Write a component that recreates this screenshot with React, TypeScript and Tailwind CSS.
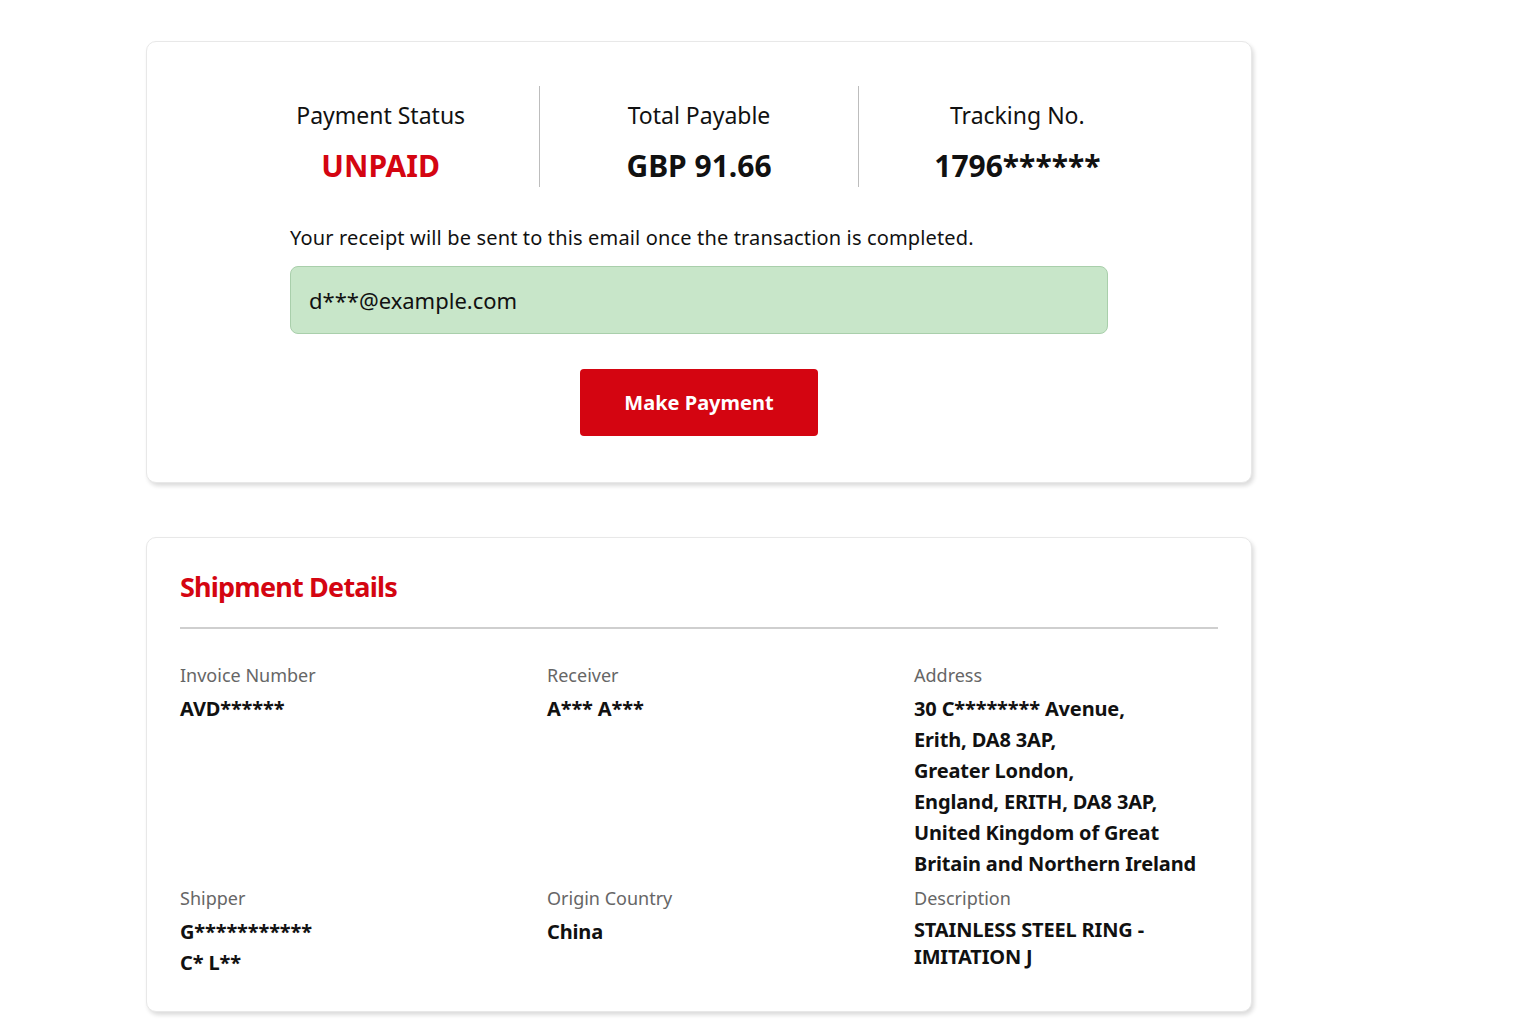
export default function App() {
  const font = { fontFamily: '"Noto Sans", "Open Sans", Arial, sans-serif' }

  return (
    <div className="min-h-screen bg-white pt-[41px] pb-8" style={font}>
      <div className="ml-[146px] w-[1106px] flex flex-col gap-[54px]">
        {/* payment summary */}
        <div className="rounded-[10px] border border-[#e8e8e8] bg-white shadow-[2px_3px_4px_rgba(0,0,0,0.14)] pt-[44px] pb-[46px]">
          <div className="mx-auto w-[954px] flex">
            <SummaryItem label="Payment Status" value="UNPAID" valueClass="text-[#d40511]" />
            <SummaryItem label="Total Payable" value="GBP 91.66" border />
            <SummaryItem label="Tracking No." value="1796******" border />
          </div>

          <div className="mx-auto w-[818px] mt-[37px]">
            <p className="text-[20px] leading-[28px] tracking-[0.15px] text-[#111]">
              Your receipt will be sent to this email once the transaction is completed.
            </p>
            <div className="mt-[14px] h-[68px] rounded-[8px] border border-[#a9cfab] bg-[#c8e6c9] flex items-center px-[18px] text-[22px] text-[#111]">
              d***@example.com
            </div>
          </div>

          <div className="flex justify-center mt-[35px]">
            <button className="w-[238px] h-[67px] rounded-[4px] bg-[#d40511] text-white text-[20px] font-bold">
              Make Payment
            </button>
          </div>
        </div>

        {/* shipment details */}
        <div className="rounded-[10px] border border-[#e8e8e8] bg-white shadow-[2px_3px_4px_rgba(0,0,0,0.14)] px-[33px] pt-[31px] pb-[33px]">
          <h2 className="text-[27px] leading-[36px] tracking-[-0.8px] font-bold text-[#d40511]">Shipment Details</h2>
          <div className="mt-[22px] border-t-2 border-[#cfcfcf]" />

          <div className="grid grid-cols-[367px_367px_1fr] mt-[34px] gap-y-[7px]">
            <Field label="Invoice Number" lines={['AVD******']} />
            <Field label="Receiver" lines={['A*** A***']} />
            <Field
              label="Address"
              lines={[
                '30 C******** Avenue,',
                'Erith, DA8 3AP,',
                'Greater London,',
                'England, ERITH, DA8 3AP,',
                'United Kingdom of Great',
                'Britain and Northern Ireland',
              ]}
            />
            <Field label="Shipper" lines={['G***********', 'C* L**']} />
            <Field label="Origin Country" lines={['China']} />
            <Field label="Description" lines={['STAINLESS STEEL RING -', 'IMITATION J']} tight />
          </div>
        </div>
      </div>
    </div>
  )
}

function SummaryItem({ label, value, valueClass = 'text-[#111]', border = false }: any) {
  return (
    <div className={`flex-1 h-[101px] flex flex-col items-center pt-[14px] ${border ? 'border-l border-[#bdbdbd]' : ''}`}>
      <div className="text-[23px] leading-[30px] text-[#111]">{label}</div>
      <div className={`mt-[18px] text-[30px] leading-[36px] font-bold ${valueClass}`}>{value}</div>
    </div>
  )
}

function Field({ label, lines, tight = false }: any) {
  return (
    <div>
      <div className="text-[18px] leading-[24px] text-[#666]">{label}</div>
      <div className={`mt-[6px] text-[20px] tracking-[-0.15px] font-bold text-[#111] ${tight ? 'leading-[27px]' : 'leading-[31px]'}`}>
        {lines.map((l: string, i: number) => (
          <div key={i}>{l}</div>
        ))}
      </div>
    </div>
  )
}
